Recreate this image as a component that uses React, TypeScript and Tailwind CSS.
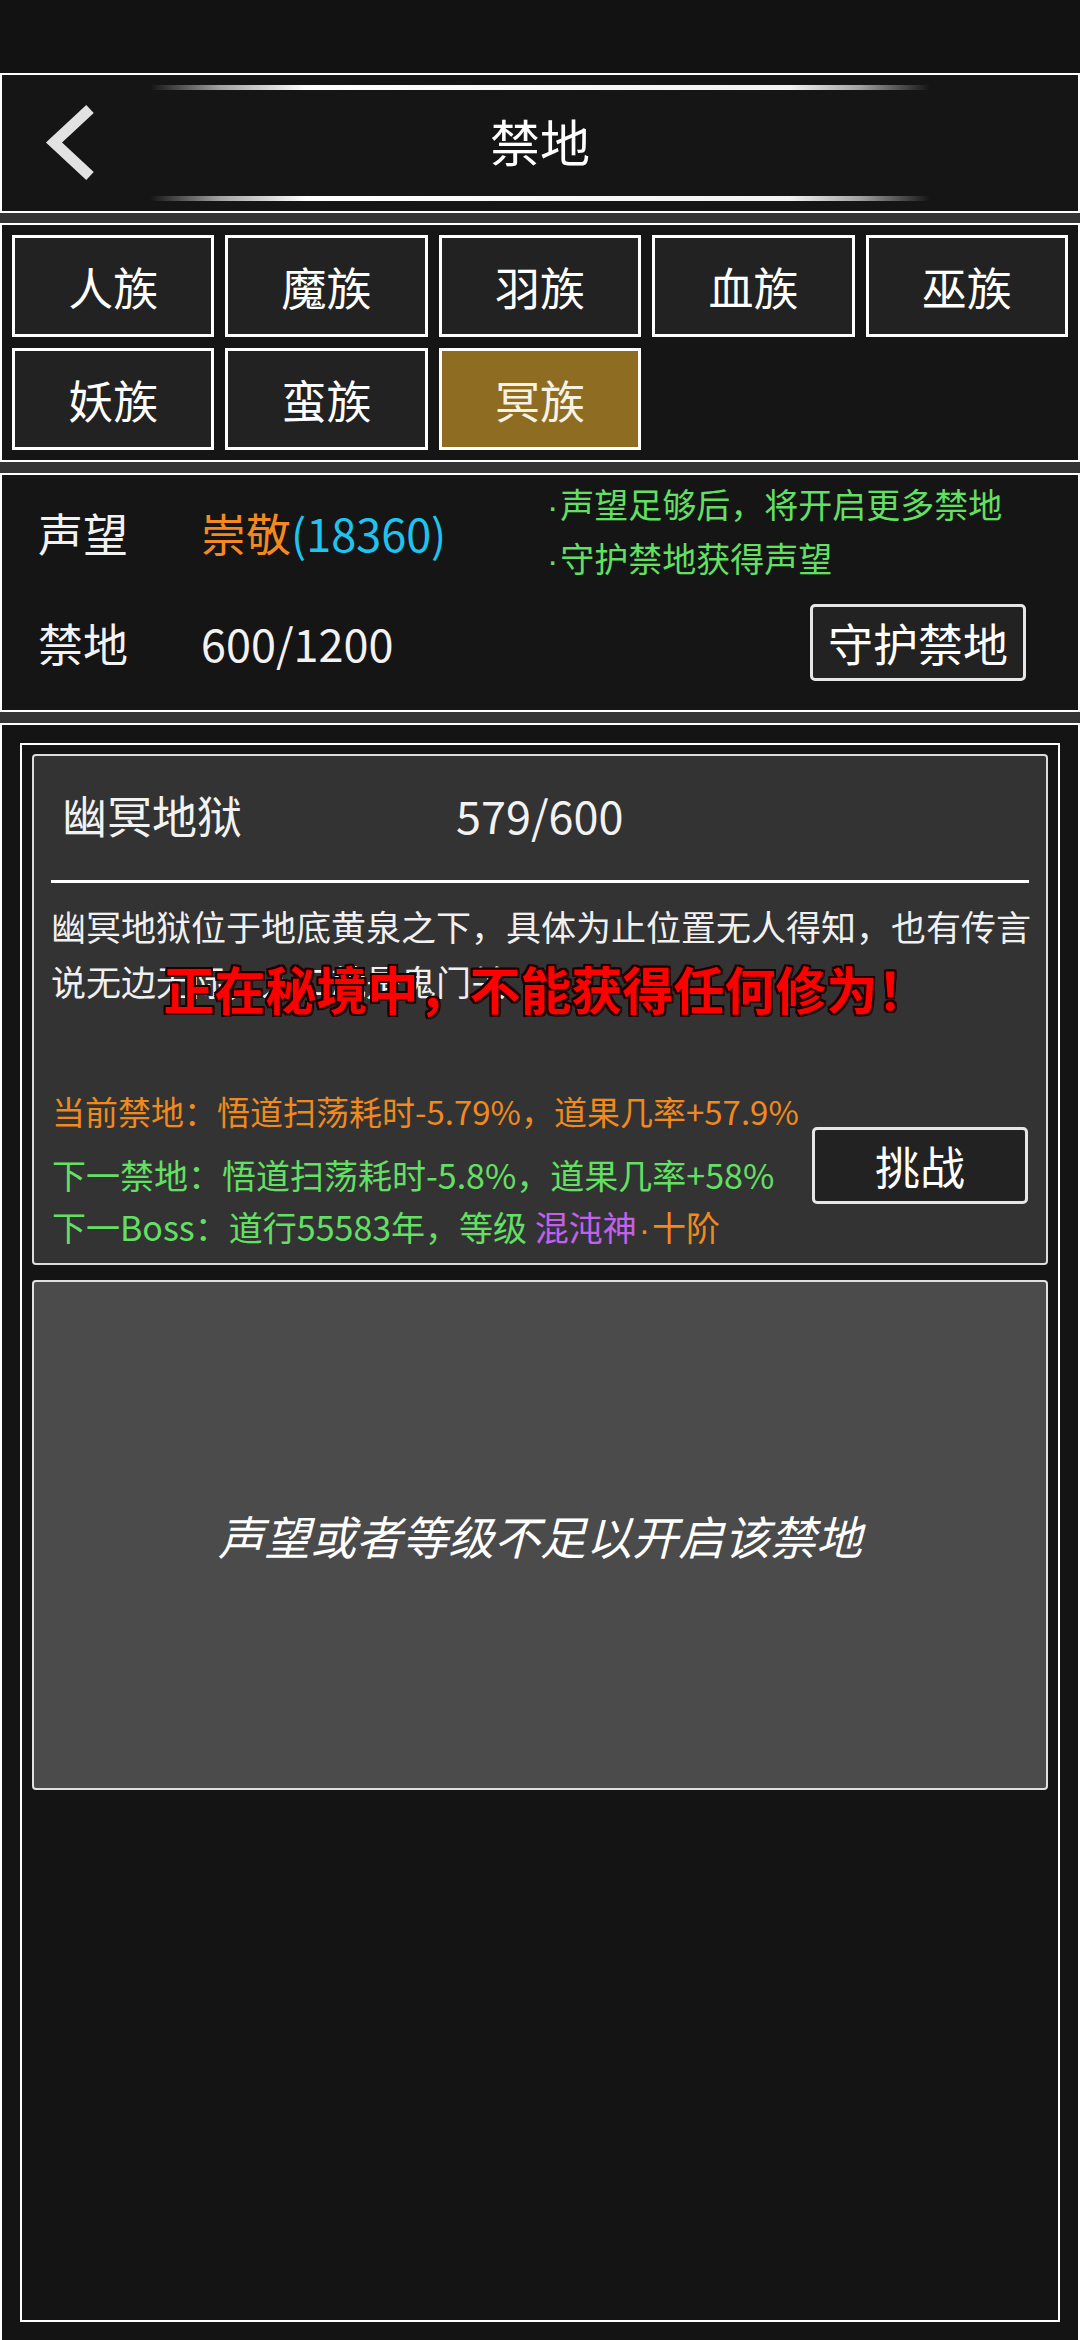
import React, { useState } from 'react'

const tribes = ['人族', '魔族', '羽族', '血族', '巫族', '妖族', '蛮族', '冥族']

const Dot: React.FC = () => <span className="font-['Liberation_Sans',sans-serif] px-[2px]">·</span>

const App: React.FC = () => {
  const [active, setActive] = useState<string>('冥族')

  return (
    <div className="relative h-[2340px] w-[1080px] overflow-hidden bg-[#353535] flex flex-col font-['Noto_Sans_CJK_SC','Noto_Sans',sans-serif] text-[#f2f2f2]">
      {/* Status bar */}
      <div className="h-[73px] shrink-0 bg-[#121212]"></div>

      {/* Header */}
      <div className="h-[140px] shrink-0 border-2 border-white bg-[#151515] flex flex-col pt-[10px] pb-[10px]">
        <div className="mx-[148px] h-[5px] shrink-0 rounded-full bg-[linear-gradient(90deg,rgba(255,255,255,0)_0%,rgba(255,255,255,0.6)_9%,#ffffff_20%,#f2f2f2_82%,rgba(255,255,255,0.6)_91%,rgba(255,255,255,0)_100%)]"></div>
        <div className="flex-1 grid grid-cols-[1fr_auto_1fr] items-center">
          <button className="justify-self-start h-[106px] w-[100px]">
            <svg viewBox="0 0 100 106" width="100" height="106">
              <path d="M88 19 L52 52.5 L88 86" fill="none" stroke="#e2e2e2" strokeWidth="11" strokeLinejoin="miter" />
            </svg>
          </button>
          <h1 className="pb-[6px] text-[50px] leading-none text-white">禁地</h1>
          <div></div>
        </div>
        <div className="mx-[148px] h-[5px] shrink-0 rounded-full bg-[linear-gradient(90deg,rgba(255,255,255,0)_0%,rgba(255,255,255,0.6)_9%,#ffffff_20%,#f2f2f2_82%,rgba(255,255,255,0.6)_91%,rgba(255,255,255,0)_100%)]"></div>
      </div>

      {/* Tribe tabs */}
      <div className="mt-[10px] shrink-0 border-2 border-white bg-[#151515] p-[10px] grid grid-cols-5 gap-[11px]">
        {tribes.map((name) => (
          <button
            key={name}
            onClick={() => setActive(name)}
            className={`h-[102px] border-[3px] border-white flex items-center justify-center text-[45px] leading-none ${
              active === name ? 'bg-[#8e6d23] text-[#f8f2e2]' : 'bg-[#222222] text-white'
            }`}
          >
            {name}
          </button>
        ))}
      </div>

      {/* Reputation info */}
      <div className="mt-[11px] h-[239px] shrink-0 border-2 border-white bg-[#151515] pl-[36px] pr-[52px]">
        <div className="h-[120px] grid grid-cols-[163px_344px_1fr] items-center">
          <span className="pb-[6px] text-[45px] leading-none">声望</span>
          <span className="pb-[6px] text-[45px] leading-none">
            <span className="text-[#f5891f]">崇敬</span>
            <span className="text-[#1ec4ef]">(18360)</span>
          </span>
          <div className="text-[34px] leading-[52px] text-[#63e063] whitespace-nowrap pb-[6px]">
            <p><Dot />声望足够后，将开启更多禁地</p>
            <p><Dot />守护禁地获得声望</p>
          </div>
        </div>
        <div className="h-[94px] grid grid-cols-[163px_344px_1fr] items-center">
          <span className="text-[45px] leading-none">禁地</span>
          <span className="text-[45px] leading-none">600/1200</span>
          <button className="justify-self-end w-[216px] h-[77px] border-[3px] border-[#e6e6e6] rounded-[5px] bg-[#222222] text-[45px] leading-none text-white">
            守护禁地
          </button>
        </div>
      </div>

      {/* Forbidden land list */}
      <div className="mt-[11px] flex-1 border-2 border-b-0 border-white bg-[#141414] px-[18px] pt-[18px]">
        <div className="h-[1579px] border-2 border-white px-[10px] pt-[9px]">
          {/* Current land card */}
          <div className="h-[511px] border-2 border-[#dcdcdc] rounded-[4px] bg-[#333333] flex flex-col">
            <div className="h-[124px] shrink-0 flex items-center pl-[28px] pb-[8px]">
              <span className="w-[394px] text-[45px] leading-none">幽冥地狱</span>
              <span className="text-[45px] leading-none">579/600</span>
            </div>
            <div className="mx-[17px] h-[3px] shrink-0 bg-white"></div>
            <p className="mt-[15px] shrink-0 pl-[17px] pr-[12px] text-[35px] leading-[55px] text-[#f0f0f0]">
              幽冥地狱位于地底黄泉之下，具体为止位置无人得知，也有传言说无边无际，入口就是鬼门关
            </p>
            <div className="mt-[77px] shrink-0 flex items-center pl-[18px] pr-[18px]">
              <div className="flex-1 min-w-0 text-[34px] leading-[52px] whitespace-nowrap">
                <p className="text-[33px] text-[#f08a1e]">当前禁地：悟道扫荡耗时-5.79%，道果几率+57.9%</p>
                <p className="mt-[12px] text-[#63e063]">下一禁地：悟道扫荡耗时-5.8%，道果几率+58%</p>
                <p className="text-[#63e063]">
                  下一Boss：道行55583年，等级 <span className="text-[#c460ec]">混沌神</span>
                  <span className="text-[#f08a1e]"><Dot />十阶</span>
                </p>
              </div>
              <button className="mb-[10px] shrink-0 w-[216px] h-[77px] border-[3px] border-[#e6e6e6] rounded-[5px] bg-[#222222] text-[45px] leading-none text-white">
                挑战
              </button>
            </div>
          </div>

          {/* Locked land card */}
          <div className="mt-[15px] h-[510px] border-2 border-[#e0e0e0] rounded-[4px] bg-[#4b4b4b] flex items-center justify-center">
            <span className="text-[46px] italic leading-none text-white">声望或者等级不足以开启该禁地</span>
          </div>
        </div>
      </div>

      {/* Toast overlay */}
      <div className="absolute left-0 right-0 top-[958px] pl-[12px] text-center text-[51px] leading-[60px] font-bold text-[#ff0000] [text-shadow:-2px_-2px_0_#200,2px_-2px_0_#200,-2px_2px_0_#200,2px_2px_0_#200,0_2px_0_#200,0_-2px_0_#200,2px_0_0_#200,-2px_0_0_#200]">
        正在秘境中，不能获得任何修为！
      </div>
    </div>
  )
}

export default App
